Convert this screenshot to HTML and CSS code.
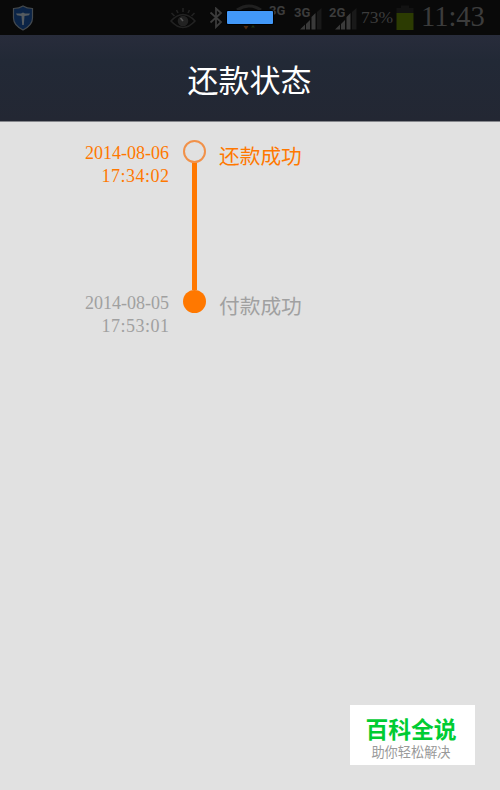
FILE: index.html
```html
<!DOCTYPE html>
<html lang="zh-CN">
<head>
  <meta charset="UTF-8" />
  <meta name="viewport" content="width=device-width, initial-scale=1.0" />
  <title>还款状态</title>
  <link rel="stylesheet" href="styles.css">
</head>
<body>
  <div class="status-bar">
    <svg class="shield" width="22" height="26" viewBox="0 0 22 26">
      <path d="M11 1 C8 3 5 3.5 1.5 3.5 V13 C1.5 19 5 22 11 25 C17 22 20.5 19 20.5 13 V3.5 C17 3.5 14 3 11 1 Z" fill="#0b2447" stroke="#44494d" stroke-width="1.2"/>
      <path d="M4 8.5 H9 L11 7.5 L13 8.500 H18 L17 10.200 L12.500 11 L11.800 20 H10.200 L9.500 11 L5 10.200 Z" fill="#555b60"/>
    </svg>
    <svg class="eye" width="26" height="22" viewBox="0 0 26 22" fill="none" stroke="#222" stroke-width="1.600">
      <path d="M1 14 Q13 1 25 14 Q13 27 1 14 Z"/>
      <circle cx="13" cy="14" r="4.500" fill="#222"/>
      <path d="M13 14 L10.500 11" stroke="#555"/>
      <path d="M13 1 V5 M6.500 3 L8 6 M19.500 3 L18 6 M1.500 6 L4.500 9 M24.500 6 L21.500 9"/>
    </svg>
    <svg class="bluetooth" width="14" height="22" viewBox="0 0 14 22" fill="none" stroke="#3c3c3c" stroke-width="1.800">
      <path d="M1.500 5.500 L12 15 L7 20 V1.500 L12 6 L1.500 15.500"/>
    </svg>
    <div class="network">
      <svg width="60" height="30" viewBox="0 0 60 30">
        <path d="M11 7 Q23 -1 35 7" fill="none" stroke="#202020" stroke-width="3"/>
        <path d="M17.500 23 h5 l-2.500 3.500 z" fill="#4f2a10"/>
        <path d="M25 24.500 l2 -2.500 l2 2.500 z" fill="#1d3010"/>
      </svg>
      <span class="net-label">3G</span>
      <span class="mask"></span>
    </div>
    <div class="signal">
      <span class="net-label">3G</span>
      <svg width="28" height="22" viewBox="0 0 28 22">
        <path d="M6 21.500 L11 16.500 V21.500 Z M12 16 L16 12 V21.500 H12 Z M17.500 9 L21.500 5 V21.500 H17.500 Z" fill="#3a3a3a"/>
        <path d="M23 4 L27.500 0 V21.500 H23 Z" fill="#191919"/>
      </svg>
    </div>
    <div class="signal">
      <span class="net-label">2G</span>
      <svg width="28" height="22" viewBox="0 0 28 22">
        <path d="M6 21.500 L11 16.500 V21.500 Z M12 16 L16 12 V21.500 H12 Z M17.500 9 L21.500 5 V21.500 H17.500 Z" fill="#3a3a3a"/>
        <path d="M23 4 L27.500 0 V21.500 H23 Z" fill="#191919"/>
      </svg>
    </div>
    <span class="percent">73%</span>
    <svg class="battery" width="18" height="26" viewBox="0 0 18 26">
      <path d="M5 0.500 H13 V3 H17.500 V8 H0.500 V3 H5 Z" fill="#121212"/>
      <rect x="0.500" y="8" width="17" height="17" fill="#2c3b02"/>
    </svg>
    <span class="clock">11:43</span>
  </div>

  <header class="title-bar">
    <h1>还款状态</h1>
  </header>

  <main class="timeline">
    <div class="step active">
      <div class="time">2014-08-06<br><span class="hour">17:34:02</span></div>
      <div class="track">
        <span class="dot"></span>
        <span class="line"></span>
      </div>
      <div class="label">还款成功</div>
    </div>
    <div class="step">
      <div class="time">2014-08-05<br><span class="hour">17:53:01</span></div>
      <div class="track">
        <span class="dot"></span>
      </div>
      <div class="label">付款成功</div>
    </div>
  </main>

  <div class="watermark">
    <strong>百科全说</strong>
    <span>助你轻松解决</span>
  </div>
</body>
</html>
```

FILE: styles.css
```css
* {
  margin: 0;
  padding: 0;
  box-sizing: border-box;
}
body {
  height: 100vh;
  overflow: hidden;
  background-color: #e1e1e1;
  font-family: "Liberation Serif", "Noto Sans CJK SC", serif;
}
.status-bar {
  display: flex;
  align-items: center;
  height: 35px;
  padding-left: 12px;
  background-color: #090909;
  color: #3c3c3c;
  white-space: nowrap;
}
.status-bar svg {
  display: block;
  flex-shrink: 0;
}
.eye {
  margin-left: 136px;
}
.bluetooth {
  margin-left: 13px;
}
.network {
  position: relative;
  width: 60px;
  height: 30px;
  margin-left: 3px;
}
.net-label {
  position: absolute;
  top: 0;
  left: 0;
  font: bold 13px/16px Roboto, sans-serif;
}
.network .net-label {
  top: 0;
  left: 43px;
}
.mask {
  position: absolute;
  top: 8px;
  left: 1px;
  width: 46px;
  height: 13px;
  border-radius: 1px;
  background-color: #4298f8;
  box-shadow: 0 0 0 1px #000;
}
.signal {
  position: relative;
  width: 28px;
  height: 26px;
  margin-left: 8px;
  padding-top: 3px;
}
.signal + .signal {
  margin-left: 7px;
}
.percent {
  width: 32px;
  margin-left: 4px;
  font-size: 17.5px;
}
.battery {
  margin-left: 3px;
}
.clock {
  margin-left: 7px;
  padding-bottom: 1px;
  font-size: 28.5px;
  line-height: 32px;
}
.title-bar {
  display: flex;
  justify-content: center;
  align-items: center;
  height: 87px;
  padding-top: 7px;
  padding-right: 1px;
  background: linear-gradient(#282c3b, #222936 30%, #232733);
  border-bottom: 1px solid #85878c;
}
.title-bar h1 {
  color: #fff;
  font-size: 31px;
  font-weight: 400;
  line-height: 40px;
}
.timeline {
  padding-top: 18px;
}
.step {
  display: grid;
  grid-template-columns: 169px 50px 1fr;
  height: 150px;
  color: #a0a0a0;
}
.time {
  padding-top: 2px;
  font-size: 18px;
  line-height: 23px;
  text-align: right;
}
.hour {
  letter-spacing: 0.5px;
  margin-right: -0.5px;
}
.track {
  display: flex;
  flex-direction: column;
  align-items: center;
  padding-left: 1px;
}
.dot {
  width: 23px;
  height: 23px;
  flex-shrink: 0;
  border-radius: 50%;
  background-color: #ff7800;
}
.line {
  width: 5px;
  flex: 1;
  background-color: #ff7800;
}
.label {
  padding-top: 4px;
  font-size: 20.7px;
  line-height: 26px;
}
.active {
  color: #ff7800;
}
.active .dot {
  background-color: transparent;
  border: 2px solid #f19149;
}
.watermark {
  position: fixed;
  top: 705px;
  left: 350px;
  display: flex;
  flex-direction: column;
  align-items: center;
  width: 125px;
  height: 60px;
  padding-top: 10px;
  padding-right: 3px;
  background-color: #fff;
  font-family: "Noto Sans CJK SC", sans-serif;
}
.watermark strong {
  color: #00cc33;
  font-size: 22.8px;
  font-weight: 700;
  line-height: 27px;
}
.watermark span {
  color: #999;
  font-size: 13.2px;
  line-height: 19px;
}
```
